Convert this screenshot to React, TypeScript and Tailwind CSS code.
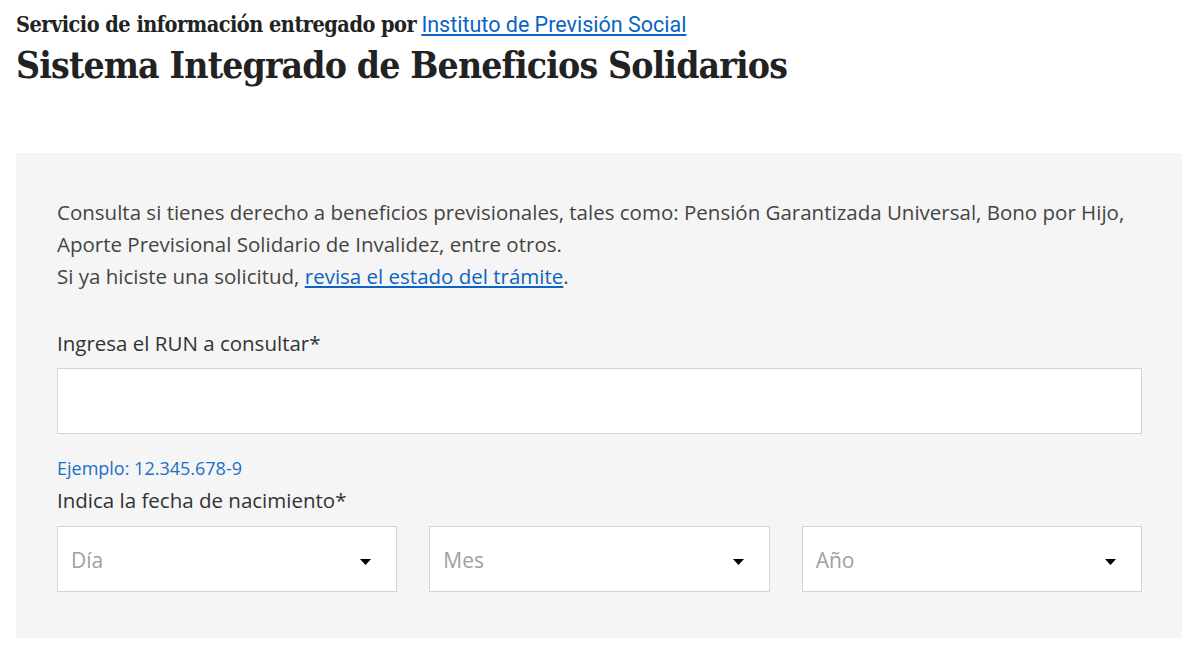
import React from "react";

const slab = { fontFamily: '"DejaVu Serif", "Liberation Serif", serif' };
const body = { fontFamily: '"Open Sans", "Noto Sans", sans-serif' };

function Caret() {
  return (
    <svg width="11" height="6" viewBox="0 0 11 6" className="mt-[2px] shrink-0">
      <path d="M0 0 L11 0 L5.5 6 Z" fill="#000" />
    </svg>
  );
}

function SelectBox({ label }: { label: string }) {
  return (
    <div className="flex h-[66px] flex-1 items-center justify-between border border-[#d4d4d4] bg-white pl-[13px] pr-[25px] pt-[3px]">
      <span className="text-[21px] text-[#a0a0a0]">{label}</span>
      <Caret />
    </div>
  );
}

export default function App() {
  return (
    <div className="min-h-[647px] bg-white text-[#333]" style={body}>
      <div className="px-[16px] pt-[11px]">
        <div className="text-[20px] leading-[28px] text-[#222]">
          <span className="text-[21.5px] font-bold tracking-[-0.5px]" style={{ ...slab, fontStretch: "condensed" }}>
            Servicio de información entregado por
          </span>{" "}
          <a className="text-[21.5px] text-[#0b63c5] underline underline-offset-2" style={{ fontFamily: "Roboto, sans-serif" }}>
            Instituto de Previsión Social
          </a>
        </div>
        <h1
          className="mt-[2px] text-[37px] font-bold leading-[48px] tracking-[-0.85px] text-[#222]"
          style={{ ...slab, fontStretch: "condensed" }}
        >
          Sistema Integrado de Beneficios Solidarios
        </h1>
      </div>

      <div className="ml-[16px] mr-[13px] mt-[64px] bg-[#f5f5f5] pl-[41px] pr-[40px] pb-[46px] pt-[43px]">
        <p className="whitespace-nowrap text-[20.5px] leading-[32px] text-[#444]">
          Consulta si tienes derecho a beneficios previsionales, tales como: Pensión Garantizada Universal, Bono por Hijo,
          <br />
          Aporte Previsional Solidario de Invalidez, entre otros.
          <br />
          Si ya hiciste una solicitud,{" "}
          <a className="text-[#0b63c5] underline underline-offset-2">revisa el estado del trámite</a>.
        </p>

        <label className="mt-[37px] block text-[20.5px] leading-[28px] text-[#333]">Ingresa el RUN a consultar*</label>
        <div className="mt-[11px] h-[66px] border border-[#d4d4d4] bg-white" />
        <div className="mt-[23px] text-[18px] leading-[22px] text-[#1a6fc9]">Ejemplo: 12.345.678-9</div>
        <label className="mt-[7px] block text-[20.5px] leading-[28px] text-[#333]">Indica la fecha de nacimiento*</label>
        <div className="mt-[12px] flex gap-[32px]">
          <SelectBox label="Día" />
          <SelectBox label="Mes" />
          <SelectBox label="Año" />
        </div>
      </div>
    </div>
  );
}
